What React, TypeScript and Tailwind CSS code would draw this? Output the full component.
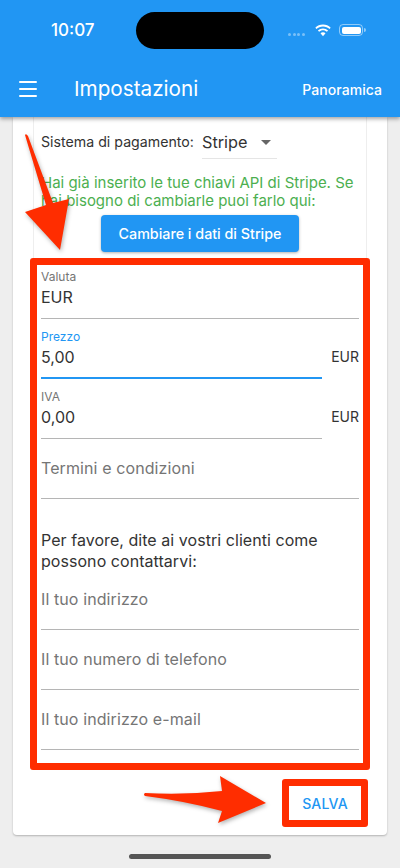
import { Menu } from 'lucide-react';

function Field({ label, value, suffix, focused }: { label: string; value?: string; suffix?: string; focused?: boolean }) {
  return (
    <div className="flex items-start">
      <div className="flex-1 min-w-0">
        {value ? (
          <div className="h-[60px] flex flex-col">
            <div className={`h-[16px] mt-[10px] text-[12px] leading-[16px] ${focused ? 'text-[#2196f3]' : 'text-[#757575]'}`}>{label}</div>
            <div className="h-[24px] text-[16px] leading-[24px] text-[#333]">{value}</div>
            <div className={`mt-auto ${focused ? 'h-[2px] bg-[#2196f3]' : 'h-[1px] bg-[#b5b5b5]'}`} />
          </div>
        ) : (
          <div className="h-[60px] flex flex-col">
            <div className="mt-[17px] h-[24px] text-[16px] tracking-[0.1px] leading-[24px] text-[#757575]">{label}</div>
            <div className="mt-auto h-[1px] bg-[#b5b5b5]" />
          </div>
        )}
      </div>
      {suffix && <div className="ml-[9px] mt-[26px] text-[14px] leading-[24px] text-[#333]">{suffix}</div>}
    </div>
  );
}

export default function App() {
  return (
    <div className="relative w-[400px] h-[868px] overflow-hidden bg-[#eeeeee] font-['Inter',sans-serif]">
      <header className="relative z-10 h-[117px] bg-[#2196f3] shadow-[0_2px_4px_rgba(0,0,0,0.35)] text-white">
        <div className="h-[61px] flex items-start relative">
          <span className="absolute left-[51px] top-[20px] text-[17px] leading-[20px] font-medium">10:07</span>
          <div className="absolute left-[136px] top-[12px] w-[128px] h-[37px] rounded-full bg-black" />
          <div className="absolute left-[288px] top-[33px] flex gap-[1.500px] opacity-40">
            <i className="w-[3px] h-[3px] rounded-full bg-white" />
            <i className="w-[3px] h-[3px] rounded-full bg-white" />
            <i className="w-[3px] h-[3px] rounded-full bg-white" />
            <i className="w-[3px] h-[3px] rounded-full bg-white" />
          </div>
          <svg className="absolute left-[314px] top-[24px]" width="18" height="13" viewBox="0 0 18 13" fill="white">
            <path d="M9 2.4c2.5 0 4.8 1 6.5 2.6l1.2-1.3C14.700 1.700 12 .6 9 .6S3.300 1.700 1.300 3.700L2.500 5C4.200 3.400 6.500 2.400 9 2.400z" />
            <path d="M9 6.200c1.500 0 2.800.6 3.900 1.500l1.200-1.300C12.700 5.200 11 4.400 9 4.400s-3.700.8-5.100 2l1.200 1.300C6.200 6.800 7.500 6.200 9 6.200z" />
            <path d="M9 8.200c-1 0-1.900.4-2.500 1L9 12.200l2.500-3c-.6-.6-1.500-1-2.500-1z" />
          </svg>
          <div className="absolute left-[339px] top-[24px] w-[24px] h-[12px] rounded-[4px] border border-white/50 p-[1.5px]">
            <div className="w-full h-full rounded-[2px] bg-white" />
          </div>
          <div className="absolute left-[364px] top-[28px] w-[1.500px] h-[4px] rounded-r bg-white/50" />
        </div>
        <div className="h-[56px] flex items-center pl-[16px] pr-[18px]">
          <Menu size={24} strokeWidth={2} />
          <span className="ml-[34px] text-[20.700px] leading-[28px] flex-1">Impostazioni</span>
          <span className="text-[14px] font-medium tracking-[0.05px]">Panoramica</span>
        </div>
      </header>

      <main className="mx-[13px] h-[718px] bg-white rounded-b-[4px] shadow-[0_1px_2px_rgba(0,0,0,0.25)]">
        <div className="mx-[20px] h-[653px] border-x border-[#eeeeee]">
          <div className="flex items-start px-[7px] pt-[9px]">
            <span className="mt-[6px] text-[14.200px] leading-[20px] text-[#333]">Sistema di pagamento:</span>
            <div className="ml-[8px] w-[75px] h-[33px] border-b border-[#e5e5e5] flex items-start justify-between pr-[6px]">
              <span className="mt-[4px] text-[16.300px] leading-[24px] text-[#333]">Stripe</span>
              <svg className="mt-[14px]" width="10" height="5" viewBox="0 0 10 5" fill="#666"><path d="M0 0h10L5 5z" /></svg>
            </div>
          </div>
          <p className="mx-[7px] mt-[15px] text-[15px] leading-[18px] whitespace-nowrap text-[#4caf50]">Hai già inserito le tue chiavi API di Stripe. Se<br />hai bisogno di cambiarle puoi farlo qui:</p>
          <div className="flex justify-center mt-[5px]">
            <div className="w-[198px] h-[37px] rounded-[4px] bg-[#2196f3] shadow-[0_1px_3px_rgba(0,0,0,0.3)] flex items-center justify-center text-white text-[14.300px] font-medium">Cambiare i dati di Stripe</div>
          </div>
          <section className="mt-[6px] -mx-[4px] h-[512px] border-[7px] border-[#ff2d00] rounded-[3px] px-[4px]">
            <div className="-mt-[6px]">
              <Field label="Valuta" value="EUR" />
              <Field label="Prezzo" value="5,00" suffix="EUR" focused />
              <Field label="IVA" value="0,00" suffix="EUR" />
              <Field label="Termini e condizioni" />
            </div>
            <p className="mt-[31px] text-[16px] tracking-[0.05px] leading-[21px] text-[#333]">Per favore, dite ai vostri clienti come possono contattarvi:</p>
            <div className="-mt-[2px]">
              <Field label="Il tuo indirizzo" />
              <Field label="Il tuo numero di telefono" />
              <Field label="Il tuo indirizzo e-mail" />
            </div>
          </section>
        </div>
        <div className="flex justify-end mr-[19px] mt-[9px]">
          <div className="w-[86px] h-[48px] border-[7px] border-[#ff2d00] rounded-[3px] flex items-center justify-center text-[14px] font-medium tracking-[0.2px] text-[#2196f3]">SALVA</div>
        </div>
      </main>

      <div className="mx-auto mt-[19px] w-[142px] h-[5px] rounded-full bg-[#555]" />

      <svg className="absolute left-0 top-0 z-20 drop-shadow-[1px_2px_2px_rgba(0,0,0,0.3)]" width="400" height="868" viewBox="0 0 400 868" fill="#ff2d00">
        <path d="M25 135 Q26 133 28 136 L53 203 L69 199 L60 250 L25 212 L46 205 Z" />
        <path d="M145 793 Q185 795 222 791 L220 776 L266 803 L218 823 L222 811 Q185 801 145 796 Q143 794.500 145 793 Z" />
      </svg>
    </div>
  );
}
